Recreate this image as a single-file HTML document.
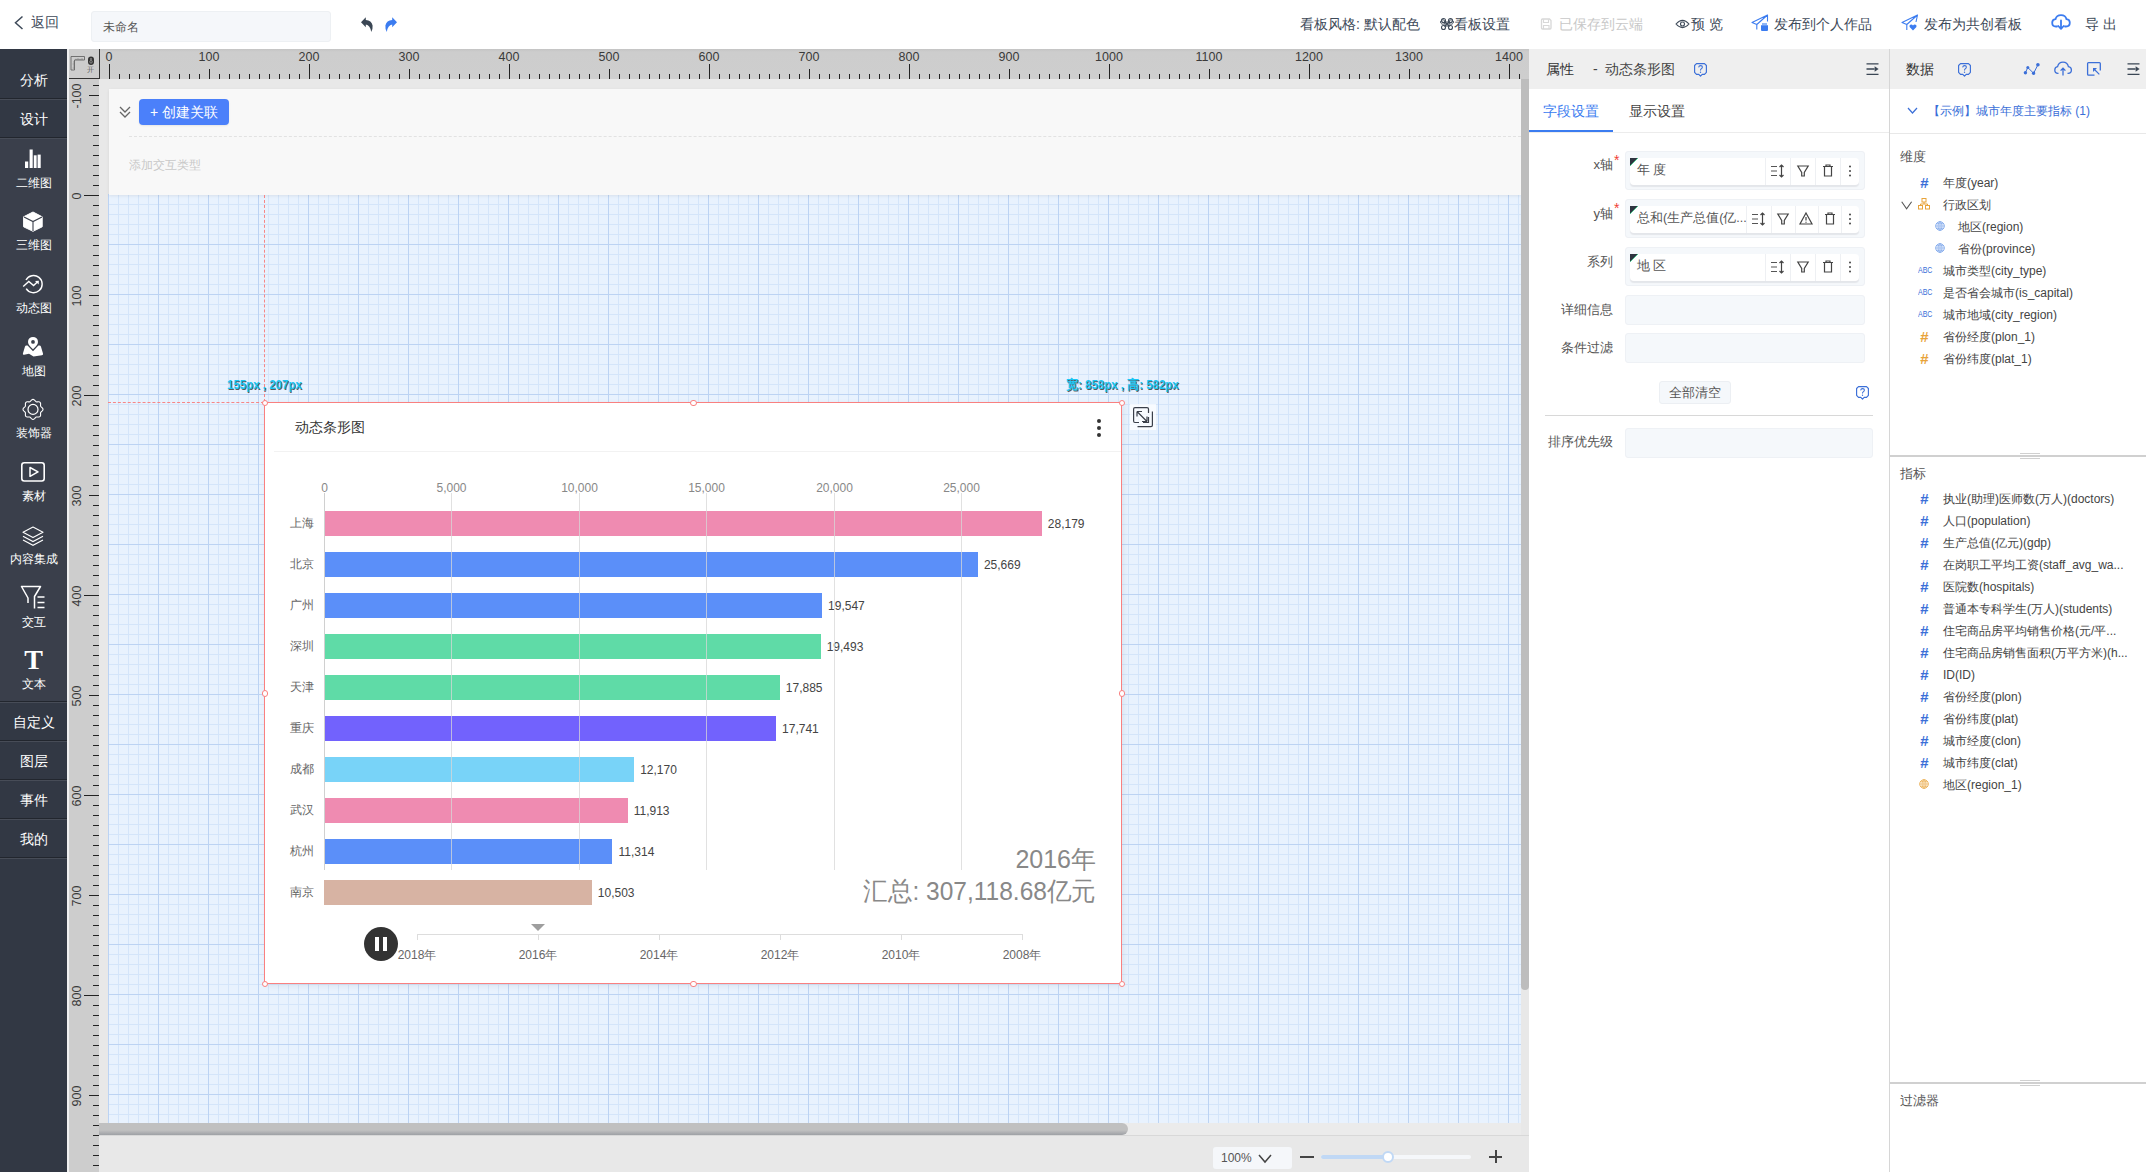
<!DOCTYPE html><html><head><meta charset="utf-8"><style>
*{margin:0;padding:0;box-sizing:border-box}
html,body{width:2146px;height:1172px;overflow:hidden;background:#fff;font-family:"Liberation Sans",sans-serif;color:#333}
.a{position:absolute}
.t{position:absolute;white-space:nowrap;line-height:1}
svg{position:absolute;overflow:visible}
</style></head><body><div class="a" style="left:0;top:0;width:2146px;height:49px;background:#fff"></div>
<svg style="left:14px;top:16px" width="10" height="14"><path d="M8.5 0.5 L1.5 6.8 L8.5 13" fill="none" stroke="#3e4a59" stroke-width="1.5"/></svg>
<div class="t" style="left:31px;top:15px;font-size:14px;color:#3e4a59">返回</div>
<div class="a" style="left:91px;top:11px;width:240px;height:31px;background:#f5f7fa;border:1px solid #edf0f3;border-radius:3px"></div>
<div class="t" style="left:103px;top:21px;font-size:12px;color:#555">未命名</div>
<svg style="left:0;top:0" width="420" height="49"><path d="M361 22.3 L365.8 17.2 V20 Q371.5 20.2 372.6 25.5 Q373 28.5 371.2 32 Q370.2 25.2 365.8 24.6 V27.3 Z" fill="#3a4654"/><path d="M397 22.3 L392.2 17.2 V20 Q386.5 20.2 385.4 25.5 Q385 28.5 386.8 32 Q387.8 25.2 392.2 24.6 V27.3 Z" fill="#3b7cf0"/></svg>
<div class="t" style="left:1300px;top:17px;font-size:14px;color:#3e4a59">看板风格: 默认配色</div>
<svg style="left:1441px;top:18px" width="12" height="12"><path d="M4 4 H8 V8 H4 Z M4 4 A2.2 2.2 0 1 0 4 4.01 M8 4 A2.2 2.2 0 1 1 8 4.01" fill="none" stroke="#3e4a59" stroke-width="1"/><circle cx="2.5" cy="2.5" r="2" fill="none" stroke="#3e4a59" stroke-width="1.1"/><circle cx="9.5" cy="2.5" r="2" fill="none" stroke="#3e4a59" stroke-width="1.1"/><circle cx="2.5" cy="9.5" r="2" fill="none" stroke="#3e4a59" stroke-width="1.1"/><circle cx="9.5" cy="9.5" r="2" fill="none" stroke="#3e4a59" stroke-width="1.1"/><path d="M3.5 3.5 L8.5 8.5 M8.5 3.5 L3.5 8.5" stroke="#3e4a59" stroke-width="1.1"/></svg>
<div class="t" style="left:1454px;top:17px;font-size:14px;color:#3e4a59">看板设置</div>
<div class="t" style="left:1559px;top:17px;font-size:14px;color:#c8c8c8">已保存到云端</div>
<svg style="left:1540px;top:18px" width="12" height="12"><path d="M1.5 2 Q1.5 1 2.5 1 H9.5 L11 2.5 V10 Q11 11 10 11 H2.5 Q1.5 11 1.5 10 Z" fill="none" stroke="#d8d8d8" stroke-width="1.3"/><path d="M3.5 1.5 V4.5 H8.5 V1.5 M3.5 11 V7.5 H9 V11" fill="none" stroke="#d8d8d8" stroke-width="1.1"/></svg>
<svg style="left:1675px;top:18px" width="15" height="12"><path d="M1 6 Q7.5 -1.2 14 6 Q7.5 13.2 1 6 Z" fill="none" stroke="#3e4a59" stroke-width="1.1"/><circle cx="7.5" cy="6" r="2" fill="none" stroke="#3e4a59" stroke-width="1.1"/></svg>
<div class="t" style="left:1691px;top:17px;font-size:14px;color:#3e4a59">预 览</div>
<svg style="left:1751px;top:14px" width="18" height="18"><path d="M1 8.5 L16.5 1 L5.8 10.5 Z M16.5 1 V7.5 M5.8 10.5 V15.5" fill="none" stroke="#3b7cf0" stroke-width="1.1" stroke-linejoin="round"/><rect x="10" y="11" width="7" height="6" rx="1" fill="#3b7cf0"/><rect x="11" y="9" width="5" height="2.5" fill="#8fb6f7"/></svg>
<div class="t" style="left:1774px;top:17px;font-size:14px;color:#3e4a59">发布到个人作品</div>
<svg style="left:1901px;top:14px" width="18" height="18"><path d="M1 8.5 L16.5 1 L5.8 10.5 Z M16.5 1 L15 8 M5.8 10.5 V16" fill="none" stroke="#3b7cf0" stroke-width="1.1" stroke-linejoin="round"/><path d="M12 16.5 L8.6 13 Q7.8 11 9.8 10.5 Q11.2 10.3 12 11.6 Q12.8 10.3 14.2 10.5 Q16.2 11 15.4 13 Z" fill="#3b7cf0"/></svg>
<div class="t" style="left:1924px;top:17px;font-size:14px;color:#3e4a59">发布为共创看板</div>
<svg style="left:2051px;top:14px" width="20" height="17"><path d="M6 12.5 H5 Q1.2 12.5 1.2 8.8 Q1.2 5.5 4.5 5.2 Q5.5 1.2 10 1.2 Q14.5 1.2 15.5 5.2 Q18.8 5.5 18.8 8.8 Q18.8 12.5 15 12.5 H14" fill="none" stroke="#3b7cf0" stroke-width="1.8" stroke-linecap="round"/><path d="M10 6.5 V14.5 M7.3 12 L10 14.8 L12.7 12" fill="none" stroke="#3b7cf0" stroke-width="1.8" stroke-linecap="round" stroke-linejoin="round"/></svg>
<div class="t" style="left:2085px;top:17px;font-size:14px;color:#3e4a59">导 出</div>
<div class="a" style="left:0;top:49px;width:67px;height:1123px;background:#323844"></div>
<div class="a" style="left:67px;top:49px;width:2px;height:1123px;background:#f0f0f0"></div>
<div class="a" style="left:0;top:138px;width:67px;height:563px;background:#3a3f4b"></div>
<div class="a" style="left:0;top:98px;width:67px;height:1px;background:#22262e"></div>
<div class="a" style="left:0;top:99px;width:67px;height:1px;background:#474c57"></div>
<div class="a" style="left:0;top:137px;width:67px;height:1px;background:#22262e"></div>
<div class="a" style="left:0;top:138px;width:67px;height:1px;background:#474c57"></div>
<div class="a" style="left:0;top:701px;width:67px;height:1px;background:#22262e"></div>
<div class="a" style="left:0;top:702px;width:67px;height:1px;background:#474c57"></div>
<div class="a" style="left:0;top:740px;width:67px;height:1px;background:#22262e"></div>
<div class="a" style="left:0;top:741px;width:67px;height:1px;background:#474c57"></div>
<div class="a" style="left:0;top:779px;width:67px;height:1px;background:#22262e"></div>
<div class="a" style="left:0;top:780px;width:67px;height:1px;background:#474c57"></div>
<div class="a" style="left:0;top:818px;width:67px;height:1px;background:#22262e"></div>
<div class="a" style="left:0;top:819px;width:67px;height:1px;background:#474c57"></div>
<div class="a" style="left:0;top:857px;width:67px;height:1px;background:#22262e"></div>
<div class="a" style="left:0;top:858px;width:67px;height:1px;background:#474c57"></div>
<div class="t" style="left:0;width:67px;text-align:center;top:73px;font-size:14px;color:#fff">分析</div>
<div class="t" style="left:0;width:67px;text-align:center;top:112px;font-size:14px;color:#fff">设计</div>
<div class="t" style="left:0;width:67px;text-align:center;top:715px;font-size:14px;color:#fff">自定义</div>
<div class="t" style="left:0;width:67px;text-align:center;top:754px;font-size:14px;color:#fff">图层</div>
<div class="t" style="left:0;width:67px;text-align:center;top:793px;font-size:14px;color:#fff">事件</div>
<div class="t" style="left:0;width:67px;text-align:center;top:832px;font-size:14px;color:#fff">我的</div>
<div class="t" style="left:0;width:67px;text-align:center;top:177px;font-size:12px;color:#fff">二维图</div>
<div class="t" style="left:0;width:67px;text-align:center;top:239px;font-size:12px;color:#fff">三维图</div>
<div class="t" style="left:0;width:67px;text-align:center;top:302px;font-size:12px;color:#fff">动态图</div>
<div class="t" style="left:0;width:67px;text-align:center;top:365px;font-size:12px;color:#fff">地图</div>
<div class="t" style="left:0;width:67px;text-align:center;top:427px;font-size:12px;color:#fff">装饰器</div>
<div class="t" style="left:0;width:67px;text-align:center;top:490px;font-size:12px;color:#fff">素材</div>
<div class="t" style="left:0;width:67px;text-align:center;top:553px;font-size:12px;color:#fff">内容集成</div>
<div class="t" style="left:0;width:67px;text-align:center;top:616px;font-size:12px;color:#fff">交互</div>
<div class="t" style="left:0;width:67px;text-align:center;top:678px;font-size:12px;color:#fff">文本</div>
<svg style="left:0;top:0" width="67" height="700"><rect x="25" y="161.5" width="3.2" height="6.5" fill="#fff"/><rect x="29.6" y="149.5" width="3.1" height="18.5" fill="#fff"/><rect x="33.8" y="155.3" width="2.8" height="12.7" fill="#fff"/><rect x="37.6" y="154.6" width="3.1" height="13.4" fill="#fff"/><path d="M33 212 L42.2 216.8 V226.8 L33 231.3 L23.6 226.8 V216.8 Z" fill="#fff" stroke="#fff" stroke-width="1" stroke-linejoin="round"/><path d="M24 217 L33 221.6 L42 217 M33 221.6 V231" fill="none" stroke="#3a3f4b" stroke-width="1.1"/><path d="M26.0 280.0 A8.6 8.6 0 1 1 26.2 288.6" fill="none" stroke="#fff" stroke-width="1.4"/><path d="M23.2 286.5 L28.8 281.4 L33.6 285.6 L37.6 281.8" fill="none" stroke="#fff" stroke-width="1.4" stroke-linejoin="miter"/><path d="M35 281 L38.9 280.8 L38.7 284.6 Z" fill="#fff"/><path d="M33 349.3 C30.6 346.6 28 344.6 28 341.9 A5 5 0 0 1 38 341.9 C38 344.6 35.4 346.6 33 349.3 Z" fill="#fff"/><circle cx="33" cy="341.9" r="1.9" fill="#3a3f4b"/><path d="M26.3 345.6 Q25.4 345.6 25 346.6 L22.9 353.4 Q22.6 354.9 24.1 354.7 L29 353.8 L33.5 356.5 L41.9 355.2 Q43.4 355 43 353.5 L40.9 346.6 Q40.5 345.6 39.6 345.6 H38.4 L33 351.2 L27.6 345.6 Z" fill="#fff"/><path d="M43.00 409.40 L42.86 410.05 L42.49 410.65 L41.97 411.19 L41.43 411.66 L40.97 412.10 L40.67 412.58 L40.55 413.12 L40.56 413.76 L40.61 414.48 L40.60 415.23 L40.43 415.92 L40.07 416.47 L39.52 416.83 L38.83 417.00 L38.08 417.01 L37.36 416.96 L36.72 416.95 L36.18 417.07 L35.70 417.37 L35.26 417.83 L34.79 418.37 L34.25 418.89 L33.65 419.26 L33.00 419.40 L32.35 419.26 L31.75 418.89 L31.21 418.37 L30.74 417.83 L30.30 417.37 L29.82 417.07 L29.28 416.95 L28.64 416.96 L27.92 417.01 L27.17 417.00 L26.48 416.83 L25.93 416.47 L25.57 415.92 L25.40 415.23 L25.39 414.48 L25.44 413.76 L25.45 413.12 L25.33 412.58 L25.03 412.10 L24.57 411.66 L24.03 411.19 L23.51 410.65 L23.14 410.05 L23.00 409.40 L23.14 408.75 L23.51 408.15 L24.03 407.61 L24.57 407.14 L25.03 406.70 L25.33 406.22 L25.45 405.68 L25.44 405.04 L25.39 404.32 L25.40 403.57 L25.57 402.88 L25.93 402.33 L26.48 401.97 L27.17 401.80 L27.92 401.79 L28.64 401.84 L29.28 401.85 L29.82 401.73 L30.30 401.43 L30.74 400.97 L31.21 400.43 L31.75 399.91 L32.35 399.54 L33.00 399.40 L33.65 399.54 L34.25 399.91 L34.79 400.43 L35.26 400.97 L35.70 401.43 L36.18 401.73 L36.72 401.85 L37.36 401.84 L38.08 401.79 L38.83 401.80 L39.52 401.97 L40.07 402.33 L40.43 402.88 L40.60 403.57 L40.61 404.32 L40.56 405.04 L40.55 405.68 L40.67 406.22 L40.97 406.70 L41.43 407.14 L41.97 407.61 L42.49 408.15 L42.86 408.75 L43.00 409.40 Z" fill="none" stroke="#fff" stroke-width="1.1"/><circle cx="33" cy="409.4" r="5" fill="none" stroke="#fff" stroke-width="1.2"/><rect x="21.8" y="462.8" width="22.4" height="18.2" rx="2.5" fill="none" stroke="#fff" stroke-width="1.6"/><path d="M30 467.5 L38 471.9 L30 476.3 Z" fill="none" stroke="#fff" stroke-width="1.5" stroke-linejoin="round"/><path d="M33 527 L43 532.3 L33 537.6 L23 532.3 Z" fill="none" stroke="#fff" stroke-width="1.1" stroke-linejoin="round"/><path d="M23 536.3 L33 541.6 L43 536.3" fill="none" stroke="#fff" stroke-width="1.1"/><path d="M23 540 L33 545.3 L43 540" fill="none" stroke="#fff" stroke-width="1.1"/><path d="M28 603 V598 L21.5 586.5 H40.5 L34.5 596.5 V608.5" fill="none" stroke="#fff" stroke-width="1.5" stroke-linejoin="round"/><path d="M37.5 597 H44.5 M37.5 602.5 H44.5 M37.5 607.5 H44.5" stroke="#fff" stroke-width="1.3"/></svg>
<div class="t" style="left:0;width:67px;text-align:center;top:646px;font-family:'Liberation Serif',serif;font-weight:bold;font-size:28px;color:#fff">T</div>
<div class="a" style="left:69px;top:49px;width:1461px;height:30px;background:linear-gradient(#c4c4c4,#cdcdcd 3px,#cecece)"></div>
<div class="a" style="left:109px;top:64px;width:1px;height:15px;background:#222"></div>
<div class="a" style="left:119px;top:74px;width:1px;height:5px;background:#222"></div>
<div class="a" style="left:129px;top:74px;width:1px;height:5px;background:#222"></div>
<div class="a" style="left:139px;top:74px;width:1px;height:5px;background:#222"></div>
<div class="a" style="left:149px;top:74px;width:1px;height:5px;background:#222"></div>
<div class="a" style="left:159px;top:74px;width:1px;height:5px;background:#222"></div>
<div class="a" style="left:169px;top:74px;width:1px;height:5px;background:#222"></div>
<div class="a" style="left:179px;top:74px;width:1px;height:5px;background:#222"></div>
<div class="a" style="left:189px;top:74px;width:1px;height:5px;background:#222"></div>
<div class="a" style="left:199px;top:74px;width:1px;height:5px;background:#222"></div>
<div class="a" style="left:209px;top:69px;width:1px;height:10px;background:#222"></div>
<div class="a" style="left:219px;top:74px;width:1px;height:5px;background:#222"></div>
<div class="a" style="left:229px;top:74px;width:1px;height:5px;background:#222"></div>
<div class="a" style="left:239px;top:74px;width:1px;height:5px;background:#222"></div>
<div class="a" style="left:249px;top:74px;width:1px;height:5px;background:#222"></div>
<div class="a" style="left:259px;top:74px;width:1px;height:5px;background:#222"></div>
<div class="a" style="left:269px;top:74px;width:1px;height:5px;background:#222"></div>
<div class="a" style="left:279px;top:74px;width:1px;height:5px;background:#222"></div>
<div class="a" style="left:289px;top:74px;width:1px;height:5px;background:#222"></div>
<div class="a" style="left:299px;top:74px;width:1px;height:5px;background:#222"></div>
<div class="a" style="left:309px;top:64px;width:1px;height:15px;background:#222"></div>
<div class="a" style="left:319px;top:74px;width:1px;height:5px;background:#222"></div>
<div class="a" style="left:329px;top:74px;width:1px;height:5px;background:#222"></div>
<div class="a" style="left:339px;top:74px;width:1px;height:5px;background:#222"></div>
<div class="a" style="left:349px;top:74px;width:1px;height:5px;background:#222"></div>
<div class="a" style="left:359px;top:74px;width:1px;height:5px;background:#222"></div>
<div class="a" style="left:369px;top:74px;width:1px;height:5px;background:#222"></div>
<div class="a" style="left:379px;top:74px;width:1px;height:5px;background:#222"></div>
<div class="a" style="left:389px;top:74px;width:1px;height:5px;background:#222"></div>
<div class="a" style="left:399px;top:74px;width:1px;height:5px;background:#222"></div>
<div class="a" style="left:409px;top:69px;width:1px;height:10px;background:#222"></div>
<div class="a" style="left:419px;top:74px;width:1px;height:5px;background:#222"></div>
<div class="a" style="left:429px;top:74px;width:1px;height:5px;background:#222"></div>
<div class="a" style="left:439px;top:74px;width:1px;height:5px;background:#222"></div>
<div class="a" style="left:449px;top:74px;width:1px;height:5px;background:#222"></div>
<div class="a" style="left:459px;top:74px;width:1px;height:5px;background:#222"></div>
<div class="a" style="left:469px;top:74px;width:1px;height:5px;background:#222"></div>
<div class="a" style="left:479px;top:74px;width:1px;height:5px;background:#222"></div>
<div class="a" style="left:489px;top:74px;width:1px;height:5px;background:#222"></div>
<div class="a" style="left:499px;top:74px;width:1px;height:5px;background:#222"></div>
<div class="a" style="left:509px;top:64px;width:1px;height:15px;background:#222"></div>
<div class="a" style="left:519px;top:74px;width:1px;height:5px;background:#222"></div>
<div class="a" style="left:529px;top:74px;width:1px;height:5px;background:#222"></div>
<div class="a" style="left:539px;top:74px;width:1px;height:5px;background:#222"></div>
<div class="a" style="left:549px;top:74px;width:1px;height:5px;background:#222"></div>
<div class="a" style="left:559px;top:74px;width:1px;height:5px;background:#222"></div>
<div class="a" style="left:569px;top:74px;width:1px;height:5px;background:#222"></div>
<div class="a" style="left:579px;top:74px;width:1px;height:5px;background:#222"></div>
<div class="a" style="left:589px;top:74px;width:1px;height:5px;background:#222"></div>
<div class="a" style="left:599px;top:74px;width:1px;height:5px;background:#222"></div>
<div class="a" style="left:609px;top:69px;width:1px;height:10px;background:#222"></div>
<div class="a" style="left:619px;top:74px;width:1px;height:5px;background:#222"></div>
<div class="a" style="left:629px;top:74px;width:1px;height:5px;background:#222"></div>
<div class="a" style="left:639px;top:74px;width:1px;height:5px;background:#222"></div>
<div class="a" style="left:649px;top:74px;width:1px;height:5px;background:#222"></div>
<div class="a" style="left:659px;top:74px;width:1px;height:5px;background:#222"></div>
<div class="a" style="left:669px;top:74px;width:1px;height:5px;background:#222"></div>
<div class="a" style="left:679px;top:74px;width:1px;height:5px;background:#222"></div>
<div class="a" style="left:689px;top:74px;width:1px;height:5px;background:#222"></div>
<div class="a" style="left:699px;top:74px;width:1px;height:5px;background:#222"></div>
<div class="a" style="left:709px;top:64px;width:1px;height:15px;background:#222"></div>
<div class="a" style="left:719px;top:74px;width:1px;height:5px;background:#222"></div>
<div class="a" style="left:729px;top:74px;width:1px;height:5px;background:#222"></div>
<div class="a" style="left:739px;top:74px;width:1px;height:5px;background:#222"></div>
<div class="a" style="left:749px;top:74px;width:1px;height:5px;background:#222"></div>
<div class="a" style="left:759px;top:74px;width:1px;height:5px;background:#222"></div>
<div class="a" style="left:769px;top:74px;width:1px;height:5px;background:#222"></div>
<div class="a" style="left:779px;top:74px;width:1px;height:5px;background:#222"></div>
<div class="a" style="left:789px;top:74px;width:1px;height:5px;background:#222"></div>
<div class="a" style="left:799px;top:74px;width:1px;height:5px;background:#222"></div>
<div class="a" style="left:809px;top:69px;width:1px;height:10px;background:#222"></div>
<div class="a" style="left:819px;top:74px;width:1px;height:5px;background:#222"></div>
<div class="a" style="left:829px;top:74px;width:1px;height:5px;background:#222"></div>
<div class="a" style="left:839px;top:74px;width:1px;height:5px;background:#222"></div>
<div class="a" style="left:849px;top:74px;width:1px;height:5px;background:#222"></div>
<div class="a" style="left:859px;top:74px;width:1px;height:5px;background:#222"></div>
<div class="a" style="left:869px;top:74px;width:1px;height:5px;background:#222"></div>
<div class="a" style="left:879px;top:74px;width:1px;height:5px;background:#222"></div>
<div class="a" style="left:889px;top:74px;width:1px;height:5px;background:#222"></div>
<div class="a" style="left:899px;top:74px;width:1px;height:5px;background:#222"></div>
<div class="a" style="left:909px;top:64px;width:1px;height:15px;background:#222"></div>
<div class="a" style="left:919px;top:74px;width:1px;height:5px;background:#222"></div>
<div class="a" style="left:929px;top:74px;width:1px;height:5px;background:#222"></div>
<div class="a" style="left:939px;top:74px;width:1px;height:5px;background:#222"></div>
<div class="a" style="left:949px;top:74px;width:1px;height:5px;background:#222"></div>
<div class="a" style="left:959px;top:74px;width:1px;height:5px;background:#222"></div>
<div class="a" style="left:969px;top:74px;width:1px;height:5px;background:#222"></div>
<div class="a" style="left:979px;top:74px;width:1px;height:5px;background:#222"></div>
<div class="a" style="left:989px;top:74px;width:1px;height:5px;background:#222"></div>
<div class="a" style="left:999px;top:74px;width:1px;height:5px;background:#222"></div>
<div class="a" style="left:1009px;top:69px;width:1px;height:10px;background:#222"></div>
<div class="a" style="left:1019px;top:74px;width:1px;height:5px;background:#222"></div>
<div class="a" style="left:1029px;top:74px;width:1px;height:5px;background:#222"></div>
<div class="a" style="left:1039px;top:74px;width:1px;height:5px;background:#222"></div>
<div class="a" style="left:1049px;top:74px;width:1px;height:5px;background:#222"></div>
<div class="a" style="left:1059px;top:74px;width:1px;height:5px;background:#222"></div>
<div class="a" style="left:1069px;top:74px;width:1px;height:5px;background:#222"></div>
<div class="a" style="left:1079px;top:74px;width:1px;height:5px;background:#222"></div>
<div class="a" style="left:1089px;top:74px;width:1px;height:5px;background:#222"></div>
<div class="a" style="left:1099px;top:74px;width:1px;height:5px;background:#222"></div>
<div class="a" style="left:1109px;top:64px;width:1px;height:15px;background:#222"></div>
<div class="a" style="left:1119px;top:74px;width:1px;height:5px;background:#222"></div>
<div class="a" style="left:1129px;top:74px;width:1px;height:5px;background:#222"></div>
<div class="a" style="left:1139px;top:74px;width:1px;height:5px;background:#222"></div>
<div class="a" style="left:1149px;top:74px;width:1px;height:5px;background:#222"></div>
<div class="a" style="left:1159px;top:74px;width:1px;height:5px;background:#222"></div>
<div class="a" style="left:1169px;top:74px;width:1px;height:5px;background:#222"></div>
<div class="a" style="left:1179px;top:74px;width:1px;height:5px;background:#222"></div>
<div class="a" style="left:1189px;top:74px;width:1px;height:5px;background:#222"></div>
<div class="a" style="left:1199px;top:74px;width:1px;height:5px;background:#222"></div>
<div class="a" style="left:1209px;top:69px;width:1px;height:10px;background:#222"></div>
<div class="a" style="left:1219px;top:74px;width:1px;height:5px;background:#222"></div>
<div class="a" style="left:1229px;top:74px;width:1px;height:5px;background:#222"></div>
<div class="a" style="left:1239px;top:74px;width:1px;height:5px;background:#222"></div>
<div class="a" style="left:1249px;top:74px;width:1px;height:5px;background:#222"></div>
<div class="a" style="left:1259px;top:74px;width:1px;height:5px;background:#222"></div>
<div class="a" style="left:1269px;top:74px;width:1px;height:5px;background:#222"></div>
<div class="a" style="left:1279px;top:74px;width:1px;height:5px;background:#222"></div>
<div class="a" style="left:1289px;top:74px;width:1px;height:5px;background:#222"></div>
<div class="a" style="left:1299px;top:74px;width:1px;height:5px;background:#222"></div>
<div class="a" style="left:1309px;top:64px;width:1px;height:15px;background:#222"></div>
<div class="a" style="left:1319px;top:74px;width:1px;height:5px;background:#222"></div>
<div class="a" style="left:1329px;top:74px;width:1px;height:5px;background:#222"></div>
<div class="a" style="left:1339px;top:74px;width:1px;height:5px;background:#222"></div>
<div class="a" style="left:1349px;top:74px;width:1px;height:5px;background:#222"></div>
<div class="a" style="left:1359px;top:74px;width:1px;height:5px;background:#222"></div>
<div class="a" style="left:1369px;top:74px;width:1px;height:5px;background:#222"></div>
<div class="a" style="left:1379px;top:74px;width:1px;height:5px;background:#222"></div>
<div class="a" style="left:1389px;top:74px;width:1px;height:5px;background:#222"></div>
<div class="a" style="left:1399px;top:74px;width:1px;height:5px;background:#222"></div>
<div class="a" style="left:1409px;top:69px;width:1px;height:10px;background:#222"></div>
<div class="a" style="left:1419px;top:74px;width:1px;height:5px;background:#222"></div>
<div class="a" style="left:1429px;top:74px;width:1px;height:5px;background:#222"></div>
<div class="a" style="left:1439px;top:74px;width:1px;height:5px;background:#222"></div>
<div class="a" style="left:1449px;top:74px;width:1px;height:5px;background:#222"></div>
<div class="a" style="left:1459px;top:74px;width:1px;height:5px;background:#222"></div>
<div class="a" style="left:1469px;top:74px;width:1px;height:5px;background:#222"></div>
<div class="a" style="left:1479px;top:74px;width:1px;height:5px;background:#222"></div>
<div class="a" style="left:1489px;top:74px;width:1px;height:5px;background:#222"></div>
<div class="a" style="left:1499px;top:74px;width:1px;height:5px;background:#222"></div>
<div class="a" style="left:1509px;top:64px;width:1px;height:15px;background:#222"></div>
<div class="a" style="left:1519px;top:74px;width:1px;height:5px;background:#222"></div>
<div class="t" style="left:79px;width:60px;text-align:center;top:51px;font-size:12.5px;color:#3a3a3a">0</div>
<div class="t" style="left:179px;width:60px;text-align:center;top:51px;font-size:12.5px;color:#3a3a3a">100</div>
<div class="t" style="left:279px;width:60px;text-align:center;top:51px;font-size:12.5px;color:#3a3a3a">200</div>
<div class="t" style="left:379px;width:60px;text-align:center;top:51px;font-size:12.5px;color:#3a3a3a">300</div>
<div class="t" style="left:479px;width:60px;text-align:center;top:51px;font-size:12.5px;color:#3a3a3a">400</div>
<div class="t" style="left:579px;width:60px;text-align:center;top:51px;font-size:12.5px;color:#3a3a3a">500</div>
<div class="t" style="left:679px;width:60px;text-align:center;top:51px;font-size:12.5px;color:#3a3a3a">600</div>
<div class="t" style="left:779px;width:60px;text-align:center;top:51px;font-size:12.5px;color:#3a3a3a">700</div>
<div class="t" style="left:879px;width:60px;text-align:center;top:51px;font-size:12.5px;color:#3a3a3a">800</div>
<div class="t" style="left:979px;width:60px;text-align:center;top:51px;font-size:12.5px;color:#3a3a3a">900</div>
<div class="t" style="left:1079px;width:60px;text-align:center;top:51px;font-size:12.5px;color:#3a3a3a">1000</div>
<div class="t" style="left:1179px;width:60px;text-align:center;top:51px;font-size:12.5px;color:#3a3a3a">1100</div>
<div class="t" style="left:1279px;width:60px;text-align:center;top:51px;font-size:12.5px;color:#3a3a3a">1200</div>
<div class="t" style="left:1379px;width:60px;text-align:center;top:51px;font-size:12.5px;color:#3a3a3a">1300</div>
<div class="t" style="left:1479px;width:60px;text-align:center;top:51px;font-size:12.5px;color:#3a3a3a">1400</div>
<div class="a" style="left:69px;top:49px;width:31px;height:30px;background:#cdcdcd;border-right:1px solid #333;border-bottom:1px solid #333"></div>
<svg style="left:70px;top:55px" width="28" height="22"><path d="M1 1.5 H14.5 V5 H4.5 V15 H1 Z" fill="none" stroke="#666" stroke-width="0.9"/><path d="M6 5 V3.8 M8 5 V3.3 M10 5 V3.8 M12 5 V3.3 M4.5 7 H3.2 M4.5 9 H2.8 M4.5 11 H3.2 M4.5 13 H2.8" stroke="#666" stroke-width="0.7"/><rect x="18" y="1.5" width="6" height="8.5" rx="3" fill="#333"/><path d="M21 3 V5" stroke="#ccc" stroke-width="0.8"/><circle cx="21" cy="6.8" r="1.3" fill="none" stroke="#bbb" stroke-width="0.6"/></svg>
<div class="t" style="left:87px;top:66px;font-size:7px;color:#555">开</div>
<div class="a" style="left:69px;top:79px;width:30px;height:1093px;background:#cdcdcd"></div>
<div class="a" style="left:93px;top:85px;width:6px;height:1px;background:#222"></div>
<div class="a" style="left:89px;top:95px;width:10px;height:1px;background:#222"></div>
<div class="a" style="left:93px;top:105px;width:6px;height:1px;background:#222"></div>
<div class="a" style="left:93px;top:115px;width:6px;height:1px;background:#222"></div>
<div class="a" style="left:93px;top:125px;width:6px;height:1px;background:#222"></div>
<div class="a" style="left:93px;top:135px;width:6px;height:1px;background:#222"></div>
<div class="a" style="left:93px;top:145px;width:6px;height:1px;background:#222"></div>
<div class="a" style="left:93px;top:155px;width:6px;height:1px;background:#222"></div>
<div class="a" style="left:93px;top:165px;width:6px;height:1px;background:#222"></div>
<div class="a" style="left:93px;top:175px;width:6px;height:1px;background:#222"></div>
<div class="a" style="left:93px;top:185px;width:6px;height:1px;background:#222"></div>
<div class="a" style="left:84px;top:195px;width:15px;height:1px;background:#222"></div>
<div class="a" style="left:93px;top:205px;width:6px;height:1px;background:#222"></div>
<div class="a" style="left:93px;top:215px;width:6px;height:1px;background:#222"></div>
<div class="a" style="left:93px;top:225px;width:6px;height:1px;background:#222"></div>
<div class="a" style="left:93px;top:235px;width:6px;height:1px;background:#222"></div>
<div class="a" style="left:93px;top:245px;width:6px;height:1px;background:#222"></div>
<div class="a" style="left:93px;top:255px;width:6px;height:1px;background:#222"></div>
<div class="a" style="left:93px;top:265px;width:6px;height:1px;background:#222"></div>
<div class="a" style="left:93px;top:275px;width:6px;height:1px;background:#222"></div>
<div class="a" style="left:93px;top:285px;width:6px;height:1px;background:#222"></div>
<div class="a" style="left:89px;top:295px;width:10px;height:1px;background:#222"></div>
<div class="a" style="left:93px;top:305px;width:6px;height:1px;background:#222"></div>
<div class="a" style="left:93px;top:315px;width:6px;height:1px;background:#222"></div>
<div class="a" style="left:93px;top:325px;width:6px;height:1px;background:#222"></div>
<div class="a" style="left:93px;top:335px;width:6px;height:1px;background:#222"></div>
<div class="a" style="left:93px;top:345px;width:6px;height:1px;background:#222"></div>
<div class="a" style="left:93px;top:355px;width:6px;height:1px;background:#222"></div>
<div class="a" style="left:93px;top:365px;width:6px;height:1px;background:#222"></div>
<div class="a" style="left:93px;top:375px;width:6px;height:1px;background:#222"></div>
<div class="a" style="left:93px;top:385px;width:6px;height:1px;background:#222"></div>
<div class="a" style="left:84px;top:395px;width:15px;height:1px;background:#222"></div>
<div class="a" style="left:93px;top:405px;width:6px;height:1px;background:#222"></div>
<div class="a" style="left:93px;top:415px;width:6px;height:1px;background:#222"></div>
<div class="a" style="left:93px;top:425px;width:6px;height:1px;background:#222"></div>
<div class="a" style="left:93px;top:435px;width:6px;height:1px;background:#222"></div>
<div class="a" style="left:93px;top:445px;width:6px;height:1px;background:#222"></div>
<div class="a" style="left:93px;top:455px;width:6px;height:1px;background:#222"></div>
<div class="a" style="left:93px;top:465px;width:6px;height:1px;background:#222"></div>
<div class="a" style="left:93px;top:475px;width:6px;height:1px;background:#222"></div>
<div class="a" style="left:93px;top:485px;width:6px;height:1px;background:#222"></div>
<div class="a" style="left:89px;top:495px;width:10px;height:1px;background:#222"></div>
<div class="a" style="left:93px;top:505px;width:6px;height:1px;background:#222"></div>
<div class="a" style="left:93px;top:515px;width:6px;height:1px;background:#222"></div>
<div class="a" style="left:93px;top:525px;width:6px;height:1px;background:#222"></div>
<div class="a" style="left:93px;top:535px;width:6px;height:1px;background:#222"></div>
<div class="a" style="left:93px;top:545px;width:6px;height:1px;background:#222"></div>
<div class="a" style="left:93px;top:555px;width:6px;height:1px;background:#222"></div>
<div class="a" style="left:93px;top:565px;width:6px;height:1px;background:#222"></div>
<div class="a" style="left:93px;top:575px;width:6px;height:1px;background:#222"></div>
<div class="a" style="left:93px;top:585px;width:6px;height:1px;background:#222"></div>
<div class="a" style="left:84px;top:595px;width:15px;height:1px;background:#222"></div>
<div class="a" style="left:93px;top:605px;width:6px;height:1px;background:#222"></div>
<div class="a" style="left:93px;top:615px;width:6px;height:1px;background:#222"></div>
<div class="a" style="left:93px;top:625px;width:6px;height:1px;background:#222"></div>
<div class="a" style="left:93px;top:635px;width:6px;height:1px;background:#222"></div>
<div class="a" style="left:93px;top:645px;width:6px;height:1px;background:#222"></div>
<div class="a" style="left:93px;top:655px;width:6px;height:1px;background:#222"></div>
<div class="a" style="left:93px;top:665px;width:6px;height:1px;background:#222"></div>
<div class="a" style="left:93px;top:675px;width:6px;height:1px;background:#222"></div>
<div class="a" style="left:93px;top:685px;width:6px;height:1px;background:#222"></div>
<div class="a" style="left:89px;top:695px;width:10px;height:1px;background:#222"></div>
<div class="a" style="left:93px;top:705px;width:6px;height:1px;background:#222"></div>
<div class="a" style="left:93px;top:715px;width:6px;height:1px;background:#222"></div>
<div class="a" style="left:93px;top:725px;width:6px;height:1px;background:#222"></div>
<div class="a" style="left:93px;top:735px;width:6px;height:1px;background:#222"></div>
<div class="a" style="left:93px;top:745px;width:6px;height:1px;background:#222"></div>
<div class="a" style="left:93px;top:755px;width:6px;height:1px;background:#222"></div>
<div class="a" style="left:93px;top:765px;width:6px;height:1px;background:#222"></div>
<div class="a" style="left:93px;top:775px;width:6px;height:1px;background:#222"></div>
<div class="a" style="left:93px;top:785px;width:6px;height:1px;background:#222"></div>
<div class="a" style="left:84px;top:795px;width:15px;height:1px;background:#222"></div>
<div class="a" style="left:93px;top:805px;width:6px;height:1px;background:#222"></div>
<div class="a" style="left:93px;top:815px;width:6px;height:1px;background:#222"></div>
<div class="a" style="left:93px;top:825px;width:6px;height:1px;background:#222"></div>
<div class="a" style="left:93px;top:835px;width:6px;height:1px;background:#222"></div>
<div class="a" style="left:93px;top:845px;width:6px;height:1px;background:#222"></div>
<div class="a" style="left:93px;top:855px;width:6px;height:1px;background:#222"></div>
<div class="a" style="left:93px;top:865px;width:6px;height:1px;background:#222"></div>
<div class="a" style="left:93px;top:875px;width:6px;height:1px;background:#222"></div>
<div class="a" style="left:93px;top:885px;width:6px;height:1px;background:#222"></div>
<div class="a" style="left:89px;top:895px;width:10px;height:1px;background:#222"></div>
<div class="a" style="left:93px;top:905px;width:6px;height:1px;background:#222"></div>
<div class="a" style="left:93px;top:915px;width:6px;height:1px;background:#222"></div>
<div class="a" style="left:93px;top:925px;width:6px;height:1px;background:#222"></div>
<div class="a" style="left:93px;top:935px;width:6px;height:1px;background:#222"></div>
<div class="a" style="left:93px;top:945px;width:6px;height:1px;background:#222"></div>
<div class="a" style="left:93px;top:955px;width:6px;height:1px;background:#222"></div>
<div class="a" style="left:93px;top:965px;width:6px;height:1px;background:#222"></div>
<div class="a" style="left:93px;top:975px;width:6px;height:1px;background:#222"></div>
<div class="a" style="left:93px;top:985px;width:6px;height:1px;background:#222"></div>
<div class="a" style="left:84px;top:995px;width:15px;height:1px;background:#222"></div>
<div class="a" style="left:93px;top:1005px;width:6px;height:1px;background:#222"></div>
<div class="a" style="left:93px;top:1015px;width:6px;height:1px;background:#222"></div>
<div class="a" style="left:93px;top:1025px;width:6px;height:1px;background:#222"></div>
<div class="a" style="left:93px;top:1035px;width:6px;height:1px;background:#222"></div>
<div class="a" style="left:93px;top:1045px;width:6px;height:1px;background:#222"></div>
<div class="a" style="left:93px;top:1055px;width:6px;height:1px;background:#222"></div>
<div class="a" style="left:93px;top:1065px;width:6px;height:1px;background:#222"></div>
<div class="a" style="left:93px;top:1075px;width:6px;height:1px;background:#222"></div>
<div class="a" style="left:93px;top:1085px;width:6px;height:1px;background:#222"></div>
<div class="a" style="left:89px;top:1095px;width:10px;height:1px;background:#222"></div>
<div class="a" style="left:93px;top:1105px;width:6px;height:1px;background:#222"></div>
<div class="a" style="left:93px;top:1115px;width:6px;height:1px;background:#222"></div>
<div class="a" style="left:93px;top:1125px;width:6px;height:1px;background:#222"></div>
<div class="a" style="left:93px;top:1135px;width:6px;height:1px;background:#222"></div>
<div class="a" style="left:93px;top:1145px;width:6px;height:1px;background:#222"></div>
<div class="a" style="left:93px;top:1155px;width:6px;height:1px;background:#222"></div>
<div class="a" style="left:93px;top:1165px;width:6px;height:1px;background:#222"></div>
<div class="t" style="left:47px;top:90px;width:60px;height:12px;text-align:center;font-size:12.5px;color:#3a3a3a;transform:rotate(-90deg)">-100</div>
<div class="t" style="left:47px;top:190px;width:60px;height:12px;text-align:center;font-size:12.5px;color:#3a3a3a;transform:rotate(-90deg)">0</div>
<div class="t" style="left:47px;top:290px;width:60px;height:12px;text-align:center;font-size:12.5px;color:#3a3a3a;transform:rotate(-90deg)">100</div>
<div class="t" style="left:47px;top:390px;width:60px;height:12px;text-align:center;font-size:12.5px;color:#3a3a3a;transform:rotate(-90deg)">200</div>
<div class="t" style="left:47px;top:490px;width:60px;height:12px;text-align:center;font-size:12.5px;color:#3a3a3a;transform:rotate(-90deg)">300</div>
<div class="t" style="left:47px;top:590px;width:60px;height:12px;text-align:center;font-size:12.5px;color:#3a3a3a;transform:rotate(-90deg)">400</div>
<div class="t" style="left:47px;top:690px;width:60px;height:12px;text-align:center;font-size:12.5px;color:#3a3a3a;transform:rotate(-90deg)">500</div>
<div class="t" style="left:47px;top:790px;width:60px;height:12px;text-align:center;font-size:12.5px;color:#3a3a3a;transform:rotate(-90deg)">600</div>
<div class="t" style="left:47px;top:890px;width:60px;height:12px;text-align:center;font-size:12.5px;color:#3a3a3a;transform:rotate(-90deg)">700</div>
<div class="t" style="left:47px;top:990px;width:60px;height:12px;text-align:center;font-size:12.5px;color:#3a3a3a;transform:rotate(-90deg)">800</div>
<div class="t" style="left:47px;top:1090px;width:60px;height:12px;text-align:center;font-size:12.5px;color:#3a3a3a;transform:rotate(-90deg)">900</div>
<div class="a" style="left:99px;top:79px;width:1431px;height:1093px;background:#e8e8e8"></div>
<div class="a" style="left:108px;top:194px;width:1413px;height:929px;background-color:#e8f2fe;background-image:linear-gradient(90deg,#bcd3f3 1px,transparent 1px),linear-gradient(180deg,#bcd3f3 1px,transparent 1px),linear-gradient(90deg,#d4e5fa 1px,transparent 1px),linear-gradient(180deg,#d4e5fa 1px,transparent 1px);background-size:50px 50px,50px 50px,10px 10px,10px 10px;background-position:0 0,0 0,0 0,0 0"></div>
<div class="a" style="left:108.6px;top:88.7px;width:1412.4px;height:106px;background:#f8f8f8;box-shadow:0 1px 3px rgba(0,0,0,.08)"></div>
<svg style="left:119px;top:106px" width="12" height="12"><path d="M1 1 L6 6 L11 1 M1 6 L6 11 L11 6" fill="none" stroke="#666" stroke-width="1.3"/></svg>
<div class="a" style="left:139px;top:99px;width:90px;height:26px;background:#4b80fa;border-radius:4px;box-shadow:0 1px 2px rgba(0,0,0,.08)"></div>
<div class="t" style="left:139px;width:90px;text-align:center;top:105px;font-size:14px;color:#fff">+ 创建关联</div>
<div class="a" style="left:129px;top:136px;width:1392px;height:0;border-top:1px dashed #e2e2e2"></div>
<div class="t" style="left:129px;top:159px;font-size:12px;color:#c8c8c8">添加交互类型</div>
<div class="a" style="left:1521px;top:79px;width:8px;height:911px;background:#bdbdbd;border-radius:0 0 4px 4px"></div>
<div class="a" style="left:99px;top:1123px;width:1422px;height:12px;background:#ebebeb"></div>
<div class="a" style="left:99px;top:1123px;width:1029px;height:12px;background:linear-gradient(#c0c0c0 60%,#9da0a5);border-radius:0 6px 6px 0"></div>
<div class="a" style="left:99px;top:1135px;width:1431px;height:37px;background:#e8e8e8;border-top:1px solid #d8d8d8"></div>
<div class="a" style="left:1213px;top:1147px;width:79px;height:22px;background:#f5f7fa;border-radius:3px"></div>
<div class="t" style="left:1221px;top:1152px;font-size:12px;color:#555">100%</div>
<svg style="left:1258px;top:1154px" width="14" height="9"><path d="M1 1 L7 8 L13 1" fill="none" stroke="#444" stroke-width="1.5"/></svg>
<div class="a" style="left:1300px;top:1156px;width:14px;height:2px;background:#444"></div>
<div class="a" style="left:1321px;top:1155px;width:150px;height:4px;background:#f5f7fa;border-radius:2px"></div>
<div class="a" style="left:1321px;top:1155px;width:67px;height:4px;background:#c0d8f5;border-radius:2px"></div>
<div class="a" style="left:1382px;top:1151px;width:12px;height:12px;background:#fff;border:2px solid #c0d8f5;border-radius:50%"></div>
<div class="a" style="left:1489px;top:1156px;width:13px;height:2px;background:#444"></div>
<div class="a" style="left:1495px;top:1150px;width:2px;height:13px;background:#444"></div>
<div class="a" style="left:264px;top:195px;width:0;height:207px;border-left:1px dashed #f78686"></div>
<div class="a" style="left:108px;top:402px;width:156px;height:0;border-top:1px dashed #f78686"></div>
<div class="a" style="left:264px;top:402px;width:858px;height:582px;background:#fff;border:1px solid #f98080;box-shadow:2px 2px 6px rgba(0,0,0,.06)"></div>
<div class="t" style="left:227px;top:379px;font-size:12.5px;font-weight:bold;color:#1bc6f4;text-shadow:1px 1px 0.5px rgba(40,40,40,.75);transform:scaleX(.92);transform-origin:left">155px , 207px</div>
<div class="t" style="left:1066px;top:379px;font-size:12.5px;font-weight:bold;color:#1bc6f4;text-shadow:1px 1px 0.5px rgba(40,40,40,.75);transform:scaleX(.92);transform-origin:left">宽: 858px , 高: 582px</div>
<div class="t" style="left:295px;top:420px;font-size:14px;color:#333">动态条形图</div>
<div class="a" style="left:1097px;top:419px;width:4px;height:4px;border-radius:50%;background:#333"></div>
<div class="a" style="left:1097px;top:426px;width:4px;height:4px;border-radius:50%;background:#333"></div>
<div class="a" style="left:1097px;top:433px;width:4px;height:4px;border-radius:50%;background:#333"></div>
<div class="a" style="left:274px;top:451px;width:847px;height:1px;background:#f2f2f2"></div>
<div class="t" style="left:284.5px;width:80px;text-align:center;top:482px;font-size:12px;color:#888">0</div>
<div class="t" style="left:411.5px;width:80px;text-align:center;top:482px;font-size:12px;color:#888">5,000</div>
<div class="t" style="left:539.5px;width:80px;text-align:center;top:482px;font-size:12px;color:#888">10,000</div>
<div class="t" style="left:666.5px;width:80px;text-align:center;top:482px;font-size:12px;color:#888">15,000</div>
<div class="t" style="left:794.5px;width:80px;text-align:center;top:482px;font-size:12px;color:#888">20,000</div>
<div class="t" style="left:921.5px;width:80px;text-align:center;top:482px;font-size:12px;color:#888">25,000</div>
<div class="a" style="left:324.4px;top:510.8px;width:717.4px;height:25px;background:#ef8bb1"></div>
<div class="t" style="left:1047.8px;top:518.3px;font-size:12px;color:#444">28,179</div>
<div class="t" style="left:250px;width:64px;text-align:right;top:517.3px;font-size:12px;color:#666">上海</div>
<div class="a" style="left:324.4px;top:551.8px;width:653.5px;height:25px;background:#5b8ff9"></div>
<div class="t" style="left:983.9px;top:559.3px;font-size:12px;color:#444">25,669</div>
<div class="t" style="left:250px;width:64px;text-align:right;top:558.3px;font-size:12px;color:#666">北京</div>
<div class="a" style="left:324.4px;top:592.8px;width:497.7px;height:25px;background:#5b8ff9"></div>
<div class="t" style="left:828.1px;top:600.3px;font-size:12px;color:#444">19,547</div>
<div class="t" style="left:250px;width:64px;text-align:right;top:599.3px;font-size:12px;color:#666">广州</div>
<div class="a" style="left:324.4px;top:633.8px;width:496.3px;height:25px;background:#5fdba7"></div>
<div class="t" style="left:826.7px;top:641.3px;font-size:12px;color:#444">19,493</div>
<div class="t" style="left:250px;width:64px;text-align:right;top:640.3px;font-size:12px;color:#666">深圳</div>
<div class="a" style="left:324.4px;top:674.8px;width:455.4px;height:25px;background:#5fdba7"></div>
<div class="t" style="left:785.8px;top:682.3px;font-size:12px;color:#444">17,885</div>
<div class="t" style="left:250px;width:64px;text-align:right;top:681.3px;font-size:12px;color:#666">天津</div>
<div class="a" style="left:324.4px;top:715.8px;width:451.7px;height:25px;background:#7262fd"></div>
<div class="t" style="left:782.1px;top:723.3px;font-size:12px;color:#444">17,741</div>
<div class="t" style="left:250px;width:64px;text-align:right;top:722.3px;font-size:12px;color:#666">重庆</div>
<div class="a" style="left:324.4px;top:756.8px;width:309.8px;height:25px;background:#78d3f8"></div>
<div class="t" style="left:640.2px;top:764.3px;font-size:12px;color:#444">12,170</div>
<div class="t" style="left:250px;width:64px;text-align:right;top:763.3px;font-size:12px;color:#666">成都</div>
<div class="a" style="left:324.4px;top:797.8px;width:303.3px;height:25px;background:#ef8bb1"></div>
<div class="t" style="left:633.7px;top:805.3px;font-size:12px;color:#444">11,913</div>
<div class="t" style="left:250px;width:64px;text-align:right;top:804.3px;font-size:12px;color:#666">武汉</div>
<div class="a" style="left:324.4px;top:838.8px;width:288.1px;height:25px;background:#5b8ff9"></div>
<div class="t" style="left:618.5px;top:846.3px;font-size:12px;color:#444">11,314</div>
<div class="t" style="left:250px;width:64px;text-align:right;top:845.3px;font-size:12px;color:#666">杭州</div>
<div class="a" style="left:324.4px;top:879.8px;width:267.4px;height:25px;background:#d7b3a3"></div>
<div class="t" style="left:597.8px;top:887.3px;font-size:12px;color:#444">10,503</div>
<div class="t" style="left:250px;width:64px;text-align:right;top:886.3px;font-size:12px;color:#666">南京</div>
<div class="a" style="left:324px;top:493px;width:1px;height:377px;background:#d0d0d0"></div>
<div class="a" style="left:451px;top:493px;width:1px;height:377px;background:rgba(215,215,215,.75)"></div>
<div class="a" style="left:579px;top:493px;width:1px;height:377px;background:rgba(215,215,215,.75)"></div>
<div class="a" style="left:706px;top:493px;width:1px;height:377px;background:rgba(215,215,215,.75)"></div>
<div class="a" style="left:834px;top:493px;width:1px;height:377px;background:rgba(215,215,215,.75)"></div>
<div class="a" style="left:961px;top:493px;width:1px;height:377px;background:rgba(215,215,215,.75)"></div>
<div class="t" style="left:700px;width:396px;text-align:right;top:847px;font-size:25px;color:#888">2016年</div>
<div class="t" style="left:600px;width:496px;text-align:right;top:878px;font-size:26px;color:#888;transform:scaleX(.943);transform-origin:right">汇总: 307,118.68亿元</div>
<div class="a" style="left:417px;top:934px;width:606px;height:1px;background:#ddd"></div>
<div class="a" style="left:417px;top:934px;width:1px;height:6px;background:#ddd"></div>
<div class="t" style="left:377px;width:80px;text-align:center;top:949px;font-size:12px;color:#666">2018年</div>
<div class="a" style="left:538px;top:934px;width:1px;height:6px;background:#ddd"></div>
<div class="t" style="left:498px;width:80px;text-align:center;top:949px;font-size:12px;color:#666">2016年</div>
<div class="a" style="left:659px;top:934px;width:1px;height:6px;background:#ddd"></div>
<div class="t" style="left:619px;width:80px;text-align:center;top:949px;font-size:12px;color:#666">2014年</div>
<div class="a" style="left:780px;top:934px;width:1px;height:6px;background:#ddd"></div>
<div class="t" style="left:740px;width:80px;text-align:center;top:949px;font-size:12px;color:#666">2012年</div>
<div class="a" style="left:901px;top:934px;width:1px;height:6px;background:#ddd"></div>
<div class="t" style="left:861px;width:80px;text-align:center;top:949px;font-size:12px;color:#666">2010年</div>
<div class="a" style="left:1022px;top:934px;width:1px;height:6px;background:#ddd"></div>
<div class="t" style="left:982px;width:80px;text-align:center;top:949px;font-size:12px;color:#666">2008年</div>
<svg style="left:531px;top:924px" width="14" height="8"><path d="M0 0 H14 L7 7 Z" fill="#9e9e9e"/></svg>
<div class="a" style="left:364px;top:927px;width:34px;height:34px;border-radius:50%;background:#333"></div>
<div class="a" style="left:375px;top:937px;width:4px;height:14px;background:#fff"></div>
<div class="a" style="left:383px;top:937px;width:4px;height:14px;background:#fff"></div>
<div class="a" style="left:261.5px;top:399.5px;width:6.5px;height:6.5px;border-radius:50%;background:#fff;border:1px solid #f98080"></div>
<div class="a" style="left:261.5px;top:690px;width:6.5px;height:6.5px;border-radius:50%;background:#fff;border:1px solid #f98080"></div>
<div class="a" style="left:261.5px;top:980.5px;width:6.5px;height:6.5px;border-radius:50%;background:#fff;border:1px solid #f98080"></div>
<div class="a" style="left:690px;top:399.5px;width:6.5px;height:6.5px;border-radius:50%;background:#fff;border:1px solid #f98080"></div>
<div class="a" style="left:690px;top:980.5px;width:6.5px;height:6.5px;border-radius:50%;background:#fff;border:1px solid #f98080"></div>
<div class="a" style="left:1118.5px;top:399.5px;width:6.5px;height:6.5px;border-radius:50%;background:#fff;border:1px solid #f98080"></div>
<div class="a" style="left:1118.5px;top:690px;width:6.5px;height:6.5px;border-radius:50%;background:#fff;border:1px solid #f98080"></div>
<div class="a" style="left:1118.5px;top:980.5px;width:6.5px;height:6.5px;border-radius:50%;background:#fff;border:1px solid #f98080"></div>
<div class="a" style="left:1130px;top:404px;width:26px;height:26px;background:rgba(255,255,255,.7)"></div>
<svg style="left:1133px;top:407px" width="21" height="21"><path d="M15.5 6 V2 Q15.5 0.6 14 0.6 H2 Q0.6 0.6 0.6 2 V14 Q0.6 15.5 2 15.5 H6" fill="none" stroke="#3a3f4a" stroke-width="1.2"/><path d="M19.4 4.5 V18.3 Q19.4 19.6 18 19.6 H4.5" fill="none" stroke="#3a3f4a" stroke-width="1.2"/><path d="M4 4.5 L14 14.5 M4 4.5 V9.5 M4 4.5 H9 M14 14.5 V9.5 M14 14.5 H9" fill="none" stroke="#3a3f4a" stroke-width="1.2"/><path d="M15.5 10 V15.5 H10" fill="none" stroke="#3a3f4a" stroke-width="1.2"/></svg>
<div class="a" style="left:1529px;top:49px;width:361px;height:1123px;background:#fff;border-right:1px solid #d6d6d6"></div>
<div class="a" style="left:1529px;top:49px;width:360px;height:40px;background:#efefef"></div>
<div class="t" style="left:1546px;top:62px;font-size:14px;color:#333">属性</div>
<div class="t" style="left:1593px;top:62px;font-size:14px;color:#444">-&nbsp; 动态条形图</div>
<svg style="left:1694px;top:63px" width="14" height="15"><path d="M2.5 0.6 H10.5 L12.4 2.5 V9.3 L10.5 11.4 H8.2 L6.5 13.2 L4.8 11.4 H2.5 L0.6 9.3 V2.5 Z" fill="none" stroke="#3b6fd8" stroke-width="1.15" stroke-linejoin="round"/><path d="M4.6 4.4 Q5 2.6 6.6 2.6 Q8.4 2.6 8.4 4.1 Q8.4 5.1 7.2 5.9 Q6.5 6.4 6.5 7.6" fill="none" stroke="#3b6fd8" stroke-width="1.05"/><circle cx="6.5" cy="9.2" r="0.7" fill="#3b6fd8"/></svg>
<svg style="left:1866px;top:63px" width="13" height="12"><path d="M0.5 0.8 H12.5 M0.5 11.3 H12.5 M0.5 6 H8.5" fill="none" stroke="#3a4654" stroke-width="1.3"/><path d="M8.6 3.3 L12.6 6 L8.6 8.7 Z" fill="#3a4654"/></svg>
<div class="t" style="left:1543px;top:104px;font-size:14px;color:#3b7cf0">字段设置</div>
<div class="t" style="left:1629px;top:104px;font-size:14px;color:#444">显示设置</div>
<div class="a" style="left:1529px;top:132px;width:360px;height:1px;background:#ececec"></div>
<div class="a" style="left:1529px;top:130px;width:84px;height:2px;background:#3b7cf0"></div>
<div class="t" style="left:1541px;width:72px;text-align:right;top:158px;font-size:13px;color:#555">x轴</div>
<div class="t" style="left:1614px;top:153px;font-size:14px;color:#f04134">*</div>
<div class="a" style="left:1625px;top:151px;width:240px;height:39px;background:#f5f8fb;border:1px solid #eef1f5;border-radius:3px"></div>
<div class="a" style="left:1630px;top:158px;width:229px;height:27px;background:#fff;border-radius:4px;box-shadow:0 2px 1px #e4e6ea"></div>
<svg style="left:1630px;top:158px" width="9" height="9"><path d="M0 0 H8 L0 8 Z" fill="#2f3440"/><path d="M8 0 L0 8" stroke="#3bd08c" stroke-width="0.8"/></svg>
<div class="t" style="left:1637px;top:164px;font-size:12.5px;color:#555">年 度</div>
<div class="a" style="left:1765px;top:158px;width:1px;height:27px;background:#eef0f3"></div>
<div class="a" style="left:1790px;top:158px;width:1px;height:27px;background:#eef0f3"></div>
<div class="a" style="left:1815px;top:158px;width:1px;height:27px;background:#eef0f3"></div>
<div class="a" style="left:1840px;top:158px;width:1px;height:27px;background:#eef0f3"></div>
<svg style="left:1769.5px;top:163.8px" width="16" height="14"><path d="M1 2.5 H7 M1 7 H7 M1 11.5 H7" stroke="#555" stroke-width="1.2"/><path d="M11.5 1 V13 M9.5 3 L11.5 1 L13.5 3 M9.5 11 L11.5 13 L13.5 11" fill="none" stroke="#444" stroke-width="1.2"/></svg>
<svg style="left:1797px;top:164.8px" width="12" height="12"><path d="M0.8 1 H11.2 L7.3 7.5 V11 H4.7 V7.5 Z" fill="none" stroke="#444" stroke-width="1.2"/></svg>
<svg style="left:1822px;top:164.3px" width="12" height="13"><path d="M1 2.5 H11 M4 2.5 V1 H8 V2.5 M2.5 2.5 V12 H9.5 V2.5" fill="none" stroke="#444" stroke-width="1.2"/></svg>
<svg style="left:1848px;top:164.8px" width="4" height="12"><circle cx="2" cy="1.5" r="1" fill="#444"/><circle cx="2" cy="6" r="1" fill="#444"/><circle cx="2" cy="10.5" r="1" fill="#444"/></svg>
<div class="t" style="left:1541px;width:72px;text-align:right;top:207px;font-size:13px;color:#555">y轴</div>
<div class="t" style="left:1614px;top:201px;font-size:14px;color:#f04134">*</div>
<div class="a" style="left:1625px;top:199px;width:240px;height:39px;background:#f5f8fb;border:1px solid #eef1f5;border-radius:3px"></div>
<div class="a" style="left:1630px;top:206px;width:229px;height:27px;background:#fff;border-radius:4px;box-shadow:0 2px 1px #e4e6ea"></div>
<svg style="left:1630px;top:206px" width="9" height="9"><path d="M0 0 H8 L0 8 Z" fill="#2f3440"/><path d="M8 0 L0 8" stroke="#3bd08c" stroke-width="0.8"/></svg>
<div class="t" style="left:1637px;top:212px;font-size:12.5px;color:#555">总和(生产总值(亿...</div>
<div class="a" style="left:1746px;top:206px;width:1px;height:27px;background:#eef0f3"></div>
<div class="a" style="left:1771px;top:206px;width:1px;height:27px;background:#eef0f3"></div>
<div class="a" style="left:1795px;top:206px;width:1px;height:27px;background:#eef0f3"></div>
<div class="a" style="left:1818px;top:206px;width:1px;height:27px;background:#eef0f3"></div>
<div class="a" style="left:1841px;top:206px;width:1px;height:27px;background:#eef0f3"></div>
<svg style="left:1750.5px;top:211.8px" width="16" height="14"><path d="M1 2.5 H7 M1 7 H7 M1 11.5 H7" stroke="#555" stroke-width="1.2"/><path d="M11.5 1 V13 M9.5 3 L11.5 1 L13.5 3 M9.5 11 L11.5 13 L13.5 11" fill="none" stroke="#444" stroke-width="1.2"/></svg>
<svg style="left:1777px;top:212.8px" width="12" height="12"><path d="M0.8 1 H11.2 L7.3 7.5 V11 H4.7 V7.5 Z" fill="none" stroke="#444" stroke-width="1.2"/></svg>
<svg style="left:1799px;top:212.3px" width="14" height="13"><path d="M7 1 L13 12 H1 Z" fill="none" stroke="#444" stroke-width="1.2"/><path d="M7 5 V8.5 M7 9.8 V10.8" stroke="#444" stroke-width="1.2"/></svg>
<svg style="left:1823.5px;top:212.3px" width="12" height="13"><path d="M1 2.5 H11 M4 2.5 V1 H8 V2.5 M2.5 2.5 V12 H9.5 V2.5" fill="none" stroke="#444" stroke-width="1.2"/></svg>
<svg style="left:1848px;top:212.8px" width="4" height="12"><circle cx="2" cy="1.5" r="1" fill="#444"/><circle cx="2" cy="6" r="1" fill="#444"/><circle cx="2" cy="10.5" r="1" fill="#444"/></svg>
<div class="t" style="left:1541px;width:72px;text-align:right;top:255px;font-size:13px;color:#555">系列</div>
<div class="a" style="left:1625px;top:247px;width:240px;height:39px;background:#f5f8fb;border:1px solid #eef1f5;border-radius:3px"></div>
<div class="a" style="left:1630px;top:254px;width:229px;height:27px;background:#fff;border-radius:4px;box-shadow:0 2px 1px #e4e6ea"></div>
<svg style="left:1630px;top:254px" width="9" height="9"><path d="M0 0 H8 L0 8 Z" fill="#2f3440"/><path d="M8 0 L0 8" stroke="#3bd08c" stroke-width="0.8"/></svg>
<div class="t" style="left:1637px;top:260px;font-size:12.5px;color:#555">地 区</div>
<div class="a" style="left:1765px;top:254px;width:1px;height:27px;background:#eef0f3"></div>
<div class="a" style="left:1790px;top:254px;width:1px;height:27px;background:#eef0f3"></div>
<div class="a" style="left:1815px;top:254px;width:1px;height:27px;background:#eef0f3"></div>
<div class="a" style="left:1840px;top:254px;width:1px;height:27px;background:#eef0f3"></div>
<svg style="left:1769.5px;top:259.8px" width="16" height="14"><path d="M1 2.5 H7 M1 7 H7 M1 11.5 H7" stroke="#555" stroke-width="1.2"/><path d="M11.5 1 V13 M9.5 3 L11.5 1 L13.5 3 M9.5 11 L11.5 13 L13.5 11" fill="none" stroke="#444" stroke-width="1.2"/></svg>
<svg style="left:1797px;top:260.8px" width="12" height="12"><path d="M0.8 1 H11.2 L7.3 7.5 V11 H4.7 V7.5 Z" fill="none" stroke="#444" stroke-width="1.2"/></svg>
<svg style="left:1822px;top:260.3px" width="12" height="13"><path d="M1 2.5 H11 M4 2.5 V1 H8 V2.5 M2.5 2.5 V12 H9.5 V2.5" fill="none" stroke="#444" stroke-width="1.2"/></svg>
<svg style="left:1848px;top:260.8px" width="4" height="12"><circle cx="2" cy="1.5" r="1" fill="#444"/><circle cx="2" cy="6" r="1" fill="#444"/><circle cx="2" cy="10.5" r="1" fill="#444"/></svg>
<div class="t" style="left:1541px;width:72px;text-align:right;top:303px;font-size:13px;color:#555">详细信息</div>
<div class="a" style="left:1625px;top:295px;width:240px;height:30px;background:#f5f8fb;border:1px solid #eef1f5;border-radius:3px"></div>
<div class="t" style="left:1541px;width:72px;text-align:right;top:341px;font-size:13px;color:#555">条件过滤</div>
<div class="a" style="left:1625px;top:333px;width:240px;height:30px;background:#f5f8fb;border:1px solid #eef1f5;border-radius:3px"></div>
<div class="a" style="left:1659px;top:381px;width:72px;height:23px;background:#f5f8fb;border:1px solid #eceff3;border-radius:3px"></div>
<div class="t" style="left:1659px;width:72px;text-align:center;top:386px;font-size:13px;color:#555">全部清空</div>
<svg style="left:1856px;top:386px" width="14" height="15"><path d="M2.5 0.6 H10.5 L12.4 2.5 V9.3 L10.5 11.4 H8.2 L6.5 13.2 L4.8 11.4 H2.5 L0.6 9.3 V2.5 Z" fill="none" stroke="#3b6fd8" stroke-width="1.15" stroke-linejoin="round"/><path d="M4.6 4.4 Q5 2.6 6.6 2.6 Q8.4 2.6 8.4 4.1 Q8.4 5.1 7.2 5.9 Q6.5 6.4 6.5 7.6" fill="none" stroke="#3b6fd8" stroke-width="1.05"/><circle cx="6.5" cy="9.2" r="0.7" fill="#3b6fd8"/></svg>
<div class="a" style="left:1545px;top:415px;width:328px;height:1px;background:#d8d8d8"></div>
<div class="t" style="left:1531px;width:82px;text-align:right;top:435px;font-size:13px;color:#555">排序优先级</div>
<div class="a" style="left:1625px;top:428px;width:248px;height:30px;background:#f5f8fb;border:1px solid #eef1f5;border-radius:3px"></div>
<div class="a" style="left:1890px;top:49px;width:256px;height:40px;background:#efefef"></div>
<div class="t" style="left:1906px;top:62px;font-size:14px;color:#333">数据</div>
<svg style="left:1958px;top:63px" width="14" height="15"><path d="M2.5 0.6 H10.5 L12.4 2.5 V9.3 L10.5 11.4 H8.2 L6.5 13.2 L4.8 11.4 H2.5 L0.6 9.3 V2.5 Z" fill="none" stroke="#3b6fd8" stroke-width="1.15" stroke-linejoin="round"/><path d="M4.6 4.4 Q5 2.6 6.6 2.6 Q8.4 2.6 8.4 4.1 Q8.4 5.1 7.2 5.9 Q6.5 6.4 6.5 7.6" fill="none" stroke="#3b6fd8" stroke-width="1.05"/><circle cx="6.5" cy="9.2" r="0.7" fill="#3b6fd8"/></svg>
<svg style="left:0;top:0;width:2146px;height:90px" width="2146" height="90"><path d="M2025.4 72.7 L2027.8 67.5 L2033.6 73.3 L2037.9 64.8" fill="none" stroke="#3b6fd8" stroke-width="1"/><circle cx="2025.4" cy="72.7" r="1.7" fill="#3b6fd8"/><circle cx="2027.8" cy="67.5" r="1.5" fill="#3b6fd8"/><circle cx="2033.6" cy="73.3" r="1.7" fill="#3b6fd8"/><circle cx="2037.9" cy="64.8" r="1.8" fill="#3b6fd8"/><path d="M2058.5 73.4 H2058 Q2054.8 73.4 2054.8 70 Q2054.8 67 2057.6 66.6 Q2058.6 62.2 2063 62.2 Q2067.4 62.2 2068.4 66.6 Q2071.4 67 2071.4 70 Q2071.4 73.4 2068 73.4 H2067.5" fill="none" stroke="#3b6fd8" stroke-width="1.3"/><path d="M2063 75.5 V68.2 M2060.6 70.6 L2063 68.2 L2065.4 70.6" fill="none" stroke="#3b6fd8" stroke-width="1.3"/><path d="M2094.5 75.2 H2088.5 Q2087.6 75.2 2087.6 74.3 V63.6 Q2087.6 62.7 2088.5 62.7 H2099.4 Q2100.3 62.7 2100.3 63.6 V70.5" fill="none" stroke="#3b6fd8" stroke-width="1.3"/><path d="M2099.3 74.3 L2094 69" fill="none" stroke="#3b6fd8" stroke-width="1.2"/><path d="M2093 68 H2097 L2093 72 Z" fill="#3b6fd8"/></svg>
<svg style="left:2127px;top:63px" width="13" height="12"><path d="M0.5 0.8 H12.5 M0.5 11.3 H12.5 M0.5 6 H8.5" fill="none" stroke="#3a4654" stroke-width="1.3"/><path d="M8.6 3.3 L12.6 6 L8.6 8.7 Z" fill="#3a4654"/></svg>
<svg style="left:1907px;top:107px" width="11" height="7"><path d="M1 1 L5.5 6 L10 1" fill="none" stroke="#3b6fd8" stroke-width="1.2"/></svg>
<div class="t" style="left:1928px;top:105px;font-size:12px;color:#3b6fd8">【示例】城市年度主要指标 (1)</div>
<div class="a" style="left:1890px;top:133px;width:256px;height:1px;background:#e8e8e8"></div>
<div class="t" style="left:1900px;top:150px;font-size:13px;color:#555">维度</div>
<div class="t" style="left:1920px;top:175px;font-size:15px;font-weight:bold;font-style:italic;color:#3b6fd8">#</div>
<div class="t" style="left:1943px;top:177px;font-size:12px;color:#444">年度(year)</div>
<svg style="left:1918px;top:198px" width="12" height="12"><rect x="4" y="0.5" width="4" height="3.5" fill="none" stroke="#e8a33a" stroke-width="1"/><rect x="0.5" y="7.5" width="4" height="3.5" fill="none" stroke="#e8a33a" stroke-width="1"/><rect x="7.5" y="7.5" width="4" height="3.5" fill="none" stroke="#e8a33a" stroke-width="1"/><path d="M6 4 V6 M2.5 7.5 V6 H9.5 V7.5" fill="none" stroke="#e8a33a" stroke-width="1"/></svg>
<div class="t" style="left:1943px;top:199px;font-size:12px;color:#444">行政区划</div>
<svg style="left:1935px;top:221px" width="10" height="10"><circle cx="5" cy="5" r="4.3" fill="none" stroke="#6b9be8" stroke-width="0.8"/><ellipse cx="5" cy="5" rx="2" ry="4.3" fill="none" stroke="#6b9be8" stroke-width="0.6"/><path d="M5 0.7 V9.3 M0.7 5 H9.3 M1.3 2.8 H8.7 M1.3 7.2 H8.7" stroke="#6b9be8" stroke-width="0.6"/></svg>
<div class="t" style="left:1958px;top:221px;font-size:12px;color:#444">地区(region)</div>
<svg style="left:1935px;top:243px" width="10" height="10"><circle cx="5" cy="5" r="4.3" fill="none" stroke="#6b9be8" stroke-width="0.8"/><ellipse cx="5" cy="5" rx="2" ry="4.3" fill="none" stroke="#6b9be8" stroke-width="0.6"/><path d="M5 0.7 V9.3 M0.7 5 H9.3 M1.3 2.8 H8.7 M1.3 7.2 H8.7" stroke="#6b9be8" stroke-width="0.6"/></svg>
<div class="t" style="left:1958px;top:243px;font-size:12px;color:#444">省份(province)</div>
<div class="t" style="left:1918px;top:265.5px;font-size:9px;color:#3b6fd8;transform:scaleX(.78);transform-origin:left">ABC</div>
<div class="t" style="left:1943px;top:265px;font-size:12px;color:#444">城市类型(city_type)</div>
<div class="t" style="left:1918px;top:287.5px;font-size:9px;color:#3b6fd8;transform:scaleX(.78);transform-origin:left">ABC</div>
<div class="t" style="left:1943px;top:287px;font-size:12px;color:#444">是否省会城市(is_capital)</div>
<div class="t" style="left:1918px;top:309.5px;font-size:9px;color:#3b6fd8;transform:scaleX(.78);transform-origin:left">ABC</div>
<div class="t" style="left:1943px;top:309px;font-size:12px;color:#444">城市地域(city_region)</div>
<div class="t" style="left:1920px;top:329px;font-size:15px;font-weight:bold;font-style:italic;color:#e8a33a">#</div>
<div class="t" style="left:1943px;top:331px;font-size:12px;color:#444">省份经度(plon_1)</div>
<div class="t" style="left:1920px;top:351px;font-size:15px;font-weight:bold;font-style:italic;color:#e8a33a">#</div>
<div class="t" style="left:1943px;top:353px;font-size:12px;color:#444">省份纬度(plat_1)</div>
<svg style="left:1901px;top:201px" width="12" height="9"><path d="M0.7 0.8 L5.6 7.8 L10.6 0.8" fill="none" stroke="#555" stroke-width="1.1"/></svg>
<div class="a" style="left:1890px;top:455px;width:256px;height:2px;background:#d0d0d0"></div>
<div class="a" style="left:2020px;top:453px;width:20px;height:1px;background:#d0d0d0"></div>
<div class="a" style="left:2020px;top:458px;width:20px;height:1px;background:#d0d0d0"></div>
<div class="t" style="left:1900px;top:467px;font-size:13px;color:#555">指标</div>
<div class="t" style="left:1920px;top:491px;font-size:15px;font-weight:bold;font-style:italic;color:#3b6fd8">#</div>
<div class="t" style="left:1943px;top:493px;font-size:12px;color:#444">执业(助理)医师数(万人)(doctors)</div>
<div class="t" style="left:1920px;top:513px;font-size:15px;font-weight:bold;font-style:italic;color:#3b6fd8">#</div>
<div class="t" style="left:1943px;top:515px;font-size:12px;color:#444">人口(population)</div>
<div class="t" style="left:1920px;top:535px;font-size:15px;font-weight:bold;font-style:italic;color:#3b6fd8">#</div>
<div class="t" style="left:1943px;top:537px;font-size:12px;color:#444">生产总值(亿元)(gdp)</div>
<div class="t" style="left:1920px;top:557px;font-size:15px;font-weight:bold;font-style:italic;color:#3b6fd8">#</div>
<div class="t" style="left:1943px;top:559px;font-size:12px;color:#444">在岗职工平均工资(staff_avg_wa...</div>
<div class="t" style="left:1920px;top:579px;font-size:15px;font-weight:bold;font-style:italic;color:#3b6fd8">#</div>
<div class="t" style="left:1943px;top:581px;font-size:12px;color:#444">医院数(hospitals)</div>
<div class="t" style="left:1920px;top:601px;font-size:15px;font-weight:bold;font-style:italic;color:#3b6fd8">#</div>
<div class="t" style="left:1943px;top:603px;font-size:12px;color:#444">普通本专科学生(万人)(students)</div>
<div class="t" style="left:1920px;top:623px;font-size:15px;font-weight:bold;font-style:italic;color:#3b6fd8">#</div>
<div class="t" style="left:1943px;top:625px;font-size:12px;color:#444">住宅商品房平均销售价格(元/平...</div>
<div class="t" style="left:1920px;top:645px;font-size:15px;font-weight:bold;font-style:italic;color:#3b6fd8">#</div>
<div class="t" style="left:1943px;top:647px;font-size:12px;color:#444">住宅商品房销售面积(万平方米)(h...</div>
<div class="t" style="left:1920px;top:667px;font-size:15px;font-weight:bold;font-style:italic;color:#3b6fd8">#</div>
<div class="t" style="left:1943px;top:669px;font-size:12px;color:#444">ID(ID)</div>
<div class="t" style="left:1920px;top:689px;font-size:15px;font-weight:bold;font-style:italic;color:#3b6fd8">#</div>
<div class="t" style="left:1943px;top:691px;font-size:12px;color:#444">省份经度(plon)</div>
<div class="t" style="left:1920px;top:711px;font-size:15px;font-weight:bold;font-style:italic;color:#3b6fd8">#</div>
<div class="t" style="left:1943px;top:713px;font-size:12px;color:#444">省份纬度(plat)</div>
<div class="t" style="left:1920px;top:733px;font-size:15px;font-weight:bold;font-style:italic;color:#3b6fd8">#</div>
<div class="t" style="left:1943px;top:735px;font-size:12px;color:#444">城市经度(clon)</div>
<div class="t" style="left:1920px;top:755px;font-size:15px;font-weight:bold;font-style:italic;color:#3b6fd8">#</div>
<div class="t" style="left:1943px;top:757px;font-size:12px;color:#444">城市纬度(clat)</div>
<svg style="left:1919px;top:779px" width="10" height="10"><circle cx="5" cy="5" r="4.3" fill="none" stroke="#e8a33a" stroke-width="0.8"/><ellipse cx="5" cy="5" rx="2" ry="4.3" fill="none" stroke="#e8a33a" stroke-width="0.6"/><path d="M5 0.7 V9.3 M0.7 5 H9.3 M1.3 2.8 H8.7 M1.3 7.2 H8.7" stroke="#e8a33a" stroke-width="0.6"/></svg>
<div class="t" style="left:1943px;top:779px;font-size:12px;color:#444">地区(region_1)</div>
<div class="a" style="left:1890px;top:1082px;width:256px;height:2px;background:#d0d0d0"></div>
<div class="a" style="left:2020px;top:1080px;width:20px;height:1px;background:#d0d0d0"></div>
<div class="a" style="left:2020px;top:1085px;width:20px;height:1px;background:#d0d0d0"></div>
<div class="t" style="left:1900px;top:1094px;font-size:13px;color:#555">过滤器</div></body></html>
